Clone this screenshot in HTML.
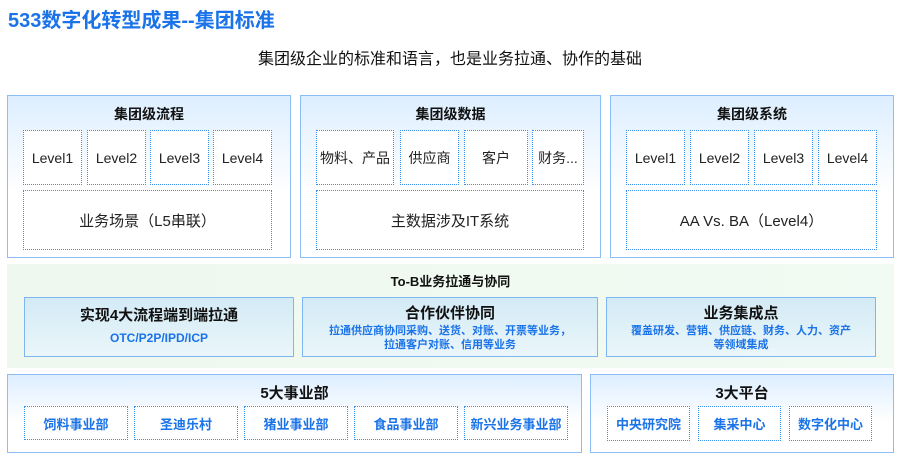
<!DOCTYPE html>
<html><head><meta charset="utf-8"><style>
*{margin:0;padding:0;box-sizing:border-box}
body{width:900px;height:458px;background:#fff;font-family:"Liberation Sans","Noto Sans CJK SC",sans-serif;position:relative;overflow:hidden;color:#111}
.a{position:absolute}
.big{border:1.5px solid #8dbdf5;background:linear-gradient(#ddeeff,#fff 60%)}
.cell{position:absolute;border:1.5px dotted #3a8fea;background:#fff;display:flex;align-items:center;justify-content:center;font-size:14px;color:#222;text-align:center}
.t{position:absolute;left:0;right:0;text-align:center;font-weight:bold;font-size:14px}
.sub{position:absolute;border:1.5px solid #7db6f2;background:linear-gradient(#d3eaf5,#eaf6fa);text-align:center}
.bc{color:#1a73e8;font-weight:bold;font-size:13px}
</style></head><body>
<div class="a" style="left:8px;top:4px;font-size:20px;font-weight:bold;color:#1a73e8">533数字化转型成果--集团标准</div>
<div class="a" style="left:0;width:900px;top:45px;text-align:center;font-size:16px">集团级企业的标准和语言，也是业务拉通、协作的基础</div>

<div class="a big" style="left:7px;top:95px;width:284px;height:163px"><div class="t" style="top:8px">集团级流程</div></div>
<div class="cell" style="left:23px;top:130px;width:59px;height:55px">Level1</div>
<div class="cell" style="left:87px;top:130px;width:59px;height:55px">Level2</div>
<div class="cell" style="left:150px;top:130px;width:59px;height:55px">Level3</div>
<div class="cell" style="left:213px;top:130px;width:59px;height:55px">Level4</div>
<div class="cell" style="left:23px;top:190px;width:249px;height:60px;font-size:15px">业务场景（L5串联）</div>

<div class="a big" style="left:300px;top:95px;width:301px;height:163px"><div class="t" style="top:8px">集团级数据</div></div>
<div class="cell" style="left:316px;top:130px;width:78px;height:55px">物料、产品</div>
<div class="cell" style="left:400px;top:130px;width:59px;height:55px">供应商</div>
<div class="cell" style="left:464px;top:130px;width:64px;height:55px">客户</div>
<div class="cell" style="left:532px;top:130px;width:52px;height:55px">财务...</div>
<div class="cell" style="left:316px;top:190px;width:268px;height:60px;font-size:15px">主数据涉及IT系统</div>

<div class="a big" style="left:610px;top:95px;width:284px;height:163px"><div class="t" style="top:8px">集团级系统</div></div>
<div class="cell" style="left:626px;top:130px;width:59px;height:55px">Level1</div>
<div class="cell" style="left:690px;top:130px;width:59px;height:55px">Level2</div>
<div class="cell" style="left:754px;top:130px;width:59px;height:55px">Level3</div>
<div class="cell" style="left:818px;top:130px;width:59px;height:55px">Level4</div>
<div class="cell" style="left:626px;top:190px;width:251px;height:60px;font-size:15px">AA Vs. BA（Level4）</div>

<div class="a" style="left:7px;top:264px;width:887px;height:104px;background:linear-gradient(90deg,#eef8ee,#f1fbf3)"><div class="t" style="top:7px;font-size:13px">To-B业务拉通与协同</div></div>
<div class="sub" style="left:24px;top:297px;width:270px;height:60px"><div style="font-weight:bold;font-size:15px;margin-top:6px">实现4大流程端到端拉通</div><div class="bc" style="font-size:12px;margin-top:6px">OTC/P2P/IPD/ICP</div></div>
<div class="sub" style="left:302px;top:297px;width:296px;height:60px"><div style="font-weight:bold;font-size:15px;margin-top:4px">合作伙伴协同</div><div class="bc" style="font-size:11px;line-height:14px;margin-top:1px">拉通供应商协同采购、送货、对账、开票等业务，<br>拉通客户对账、信用等业务</div></div>
<div class="sub" style="left:606px;top:297px;width:270px;height:60px"><div style="font-weight:bold;font-size:15px;margin-top:4px">业务集成点</div><div class="bc" style="font-size:11px;line-height:14px;margin-top:1px">覆盖研发、营销、供应链、财务、人力、资产<br>等领域集成</div></div>

<div class="a big" style="left:7px;top:374px;width:575px;height:79px"><div class="t" style="top:7px;font-size:15px">5大事业部</div></div>
<div class="cell bc" style="left:24px;top:406px;width:104px;height:34px">饲料事业部</div>
<div class="cell bc" style="left:134px;top:406px;width:104px;height:34px">圣迪乐村</div>
<div class="cell bc" style="left:244px;top:406px;width:104px;height:34px">猪业事业部</div>
<div class="cell bc" style="left:354px;top:406px;width:104px;height:34px">食品事业部</div>
<div class="cell bc" style="left:464px;top:406px;width:104px;height:34px">新兴业务事业部</div>

<div class="a big" style="left:590px;top:374px;width:304px;height:79px"><div class="t" style="top:7px;font-size:15px">3大平台</div></div>
<div class="cell bc" style="left:607px;top:406px;width:83px;height:35px">中央研究院</div>
<div class="cell bc" style="left:698px;top:406px;width:83px;height:35px">集采中心</div>
<div class="cell bc" style="left:789px;top:406px;width:83px;height:35px">数字化中心</div>
</body></html>
